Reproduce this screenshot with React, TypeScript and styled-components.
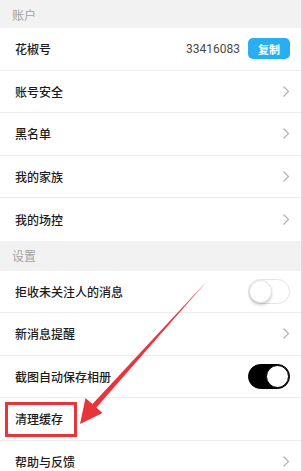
import styled, { createGlobalStyle } from 'styled-components';

const GlobalStyle = createGlobalStyle`
  html, body { margin: 0; padding: 0; background: #fff; }
  body { font-family: "Noto Sans CJK SC", "Noto Sans", sans-serif; }
`;

const Page = styled.div`
  position: relative;
  width: 303px;
  height: 471px;
  overflow: hidden;
  background: #fff;
  border-right: 2px solid #d8d8d8;
  box-sizing: border-box;
`;

const SectionHeader = styled.div<{ $h: number }>`
  height: ${({ $h }) => $h}px;
  background: #f2f2f2;
  display: flex;
  align-items: center;
  padding-left: 12px;
  font-size: 12px;
  color: #a3a3a3;
`;

const Row = styled.div<{ $last?: boolean }>`
  position: relative;
  height: 42.5px;
  box-sizing: border-box;
  display: flex;
  align-items: center;
  padding: 0 11px 0 15px;
  border-bottom: ${({ $last }) => ($last ? 'none' : '1px solid #ededed')};
`;

const Label = styled.span`
  flex: 1;
  font-size: 12px;
  font-weight: 500;
  color: #1c1c1c;
`;

const Value = styled.span`
  font-family: "Roboto", "Noto Sans", sans-serif;
  font-size: 12px;
  color: #4a4a4a;
  margin-right: 8px;
`;

const CopyButton = styled.span`
  width: 42px;
  height: 21px;
  border-radius: 5px;
  background: #2aaef2;
  color: #fff;
  font-size: 11px;
  font-weight: 700;
  display: flex;
  align-items: center;
  justify-content: center;
`;

const Switch = styled.span<{ $on?: boolean }>`
  position: relative;
  width: 42px;
  height: 25px;
  border-radius: 13px;
  box-sizing: border-box;
  background: ${({ $on }) => ($on ? '#000' : '#fff')};
  border: 1px solid ${({ $on }) => ($on ? '#000' : '#e4e4e4')};
  &::after {
    content: '';
    position: absolute;
    top: 0;
    ${({ $on }) => ($on ? 'right: 0;' : 'left: 0;')}
    width: 23px;
    height: 23px;
    border-radius: 50%;
    background: #fff;
    box-sizing: border-box;
    border: ${({ $on }) => ($on ? '1.5px solid #000' : '1px solid #e0e0e0')};
    box-shadow: ${({ $on }) => ($on ? 'none' : '0 2px 3px rgba(0,0,0,0.18)')};
  }
`;

const Highlight = styled.div`
  position: absolute;
  left: 5px;
  top: 402px;
  width: 72px;
  height: 35px;
  box-sizing: border-box;
  border: 3px solid #e8343b;
`;

const Overlay = styled.svg`
  position: absolute;
  left: 0;
  top: 0;
  pointer-events: none;
`;

const Chevron = () => (
  <svg width="8" height="13" viewBox="0 0 8 13">
    <path d="M1.5 1.5 L6.5 6.5 L1.5 11.5" fill="none" stroke="#b0b0b0" strokeWidth="1.1" />
  </svg>
);

type Item = { label: string; right?: 'chevron' | 'copy' | 'off' | 'on' | 'none' };

const account: Item[] = [
  { label: '花椒号', right: 'copy' },
  { label: '账号安全', right: 'chevron' },
  { label: '黑名单', right: 'chevron' },
  { label: '我的家族', right: 'chevron' },
  { label: '我的场控', right: 'chevron' },
];

const settings: Item[] = [
  { label: '拒收未关注人的消息', right: 'off' },
  { label: '新消息提醒', right: 'chevron' },
  { label: '截图自动保存相册', right: 'on' },
  { label: '清理缓存', right: 'none' },
  { label: '帮助与反馈', right: 'chevron' },
];

function renderRight(r: Item['right']) {
  if (r === 'copy')
    return (
      <>
        <Value>33416083</Value>
        <CopyButton>复制</CopyButton>
      </>
    );
  if (r === 'chevron') return <Chevron />;
  if (r === 'off') return <Switch />;
  if (r === 'on') return <Switch $on />;
  return null;
}

export default function App() {
  return (
    <>
      <GlobalStyle />
      <Page>
        <SectionHeader $h={28}>账户</SectionHeader>
        {account.map((it, i) => (
          <Row key={it.label} $last={i === account.length - 1}>
            <Label>{it.label}</Label>
            {renderRight(it.right)}
          </Row>
        ))}
        <SectionHeader $h={30}>设置</SectionHeader>
        {settings.map((it) => (
          <Row key={it.label}>
            <Label>{it.label}</Label>
            {renderRight(it.right)}
          </Row>
        ))}
        <Highlight />
        <Overlay width="303" height="471" viewBox="0 0 303 471">
          <polygon points="207.5,280.5 96,408 92,404.5" fill="#e8343b" />
          <polygon points="80,424 85.5,398 102.5,413" fill="#e8343b" />
        </Overlay>
      </Page>
    </>
  );
}
